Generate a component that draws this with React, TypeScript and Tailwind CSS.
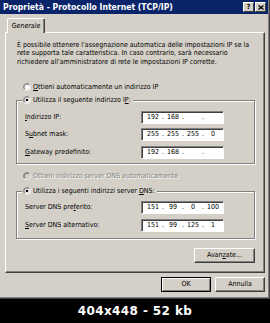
import React from 'react';

const Radio = ({ checked = false, disabled = false }: { checked?: boolean; disabled?: boolean }) => (
  <svg width="8" height="8" viewBox="0 0 12 12" className="shrink-0">
    <circle cx="6" cy="6" r="5" fill={disabled ? '#d4d0c8' : '#fff'} />
    <path d="M2.11 9.89 A5.5 5.5 0 0 1 9.89 2.11" fill="none" stroke="#808080" />
    <path d="M2.82 9.18 A4.5 4.5 0 0 1 9.18 2.82" fill="none" stroke="#404040" />
    <path d="M9.89 2.11 A5.5 5.5 0 0 1 2.11 9.89" fill="none" stroke="#fff" />
    <path d="M9.18 2.82 A4.5 4.5 0 0 1 2.82 9.18" fill="none" stroke="#d4d0c8" />
    {checked && <circle cx="6" cy="6" r="2" fill="#000" />}
  </svg>
);

const IpBox = ({ parts }: { parts: string[] }) => (
  <div className="flex items-center w-[83px] h-[13px] pl-[3px] bg-white border border-t-[#808080] border-l-[#808080] border-b-white border-r-white shadow-[inset_1px_1px_0_#404040]">
    {parts.map((p, i) => (
      <React.Fragment key={i}>
        {i > 0 && <span className="w-[4px] text-center">.</span>}
        <span className="w-[16px] text-center">{p}</span>
      </React.Fragment>
    ))}
  </div>
);

const IpRow = ({ label, parts }: { label: React.ReactNode; parts: string[] }) => (
  <div className="flex items-center h-[13px]">
    <span className="w-[116px] whitespace-nowrap">{label}</span>
    <IpBox parts={parts} />
  </div>
);

const Button = ({ children, def = false, className = '' }: { children: React.ReactNode; def?: boolean; className?: string }) => (
  <div
    className={
      'flex items-center justify-center h-[15px] ' +
      (def
        ? 'border border-black shadow-[inset_1px_1px_0_#fff,inset_-1px_-1px_0_#808080] '
        : 'border border-t-white border-l-white border-r-[#404040] border-b-[#404040] shadow-[inset_-1px_-1px_0_#808080] ') +
      className
    }
  >
    {children}
  </div>
);

export default function App() {
  return (
    <div className="w-[270px] h-[323px] bg-black flex flex-col overflow-hidden text-[7px] leading-[9px] text-black font-['DejaVu_Sans_Condensed','Liberation_Sans',sans-serif]">
      <div className="h-[299px] shrink-0 bg-[#d4d0c8] border-r border-b border-[#404040]">
        <div className="h-full border-r border-b border-[#808080] flex flex-col">
          {/* title bar */}
          <div className="h-[14px] flex items-center justify-between pl-[3px] pr-[2px] bg-[#0a246a]">
            <span className="text-white font-bold text-[8.6px] whitespace-nowrap">Proprietà - Protocollo Internet (TCP/IP)</span>
            <div className="flex gap-[1px]">
              <div className="w-[11px] h-[10px] bg-[#d4d0c8] flex items-center justify-center border border-t-white border-l-white border-r-[#404040] border-b-[#404040] font-bold text-[7px] leading-none">
                ?
              </div>
              <div className="w-[11px] h-[10px] bg-[#d4d0c8] flex items-center justify-center border border-t-white border-l-white border-r-[#404040] border-b-[#404040]">
                <svg width="6" height="5" viewBox="0 0 6 5">
                  <path d="M0.5 0.5 L5.5 4.5 M5.5 0.5 L0.5 4.5" stroke="#000" strokeWidth="1.3" />
                </svg>
              </div>
            </div>
          </div>

          <div className="flex flex-col pl-[5px] pr-[2px] pt-[4px]">
            {/* tab */}
            <div className="relative z-10 ml-[2px] -mb-[1px] w-[38px] h-[15px] bg-[#d4d0c8] flex items-center justify-center border-t border-l border-r border-t-white border-l-white border-r-[#404040] shadow-[inset_-1px_0_0_#808080] rounded-t-[2px]">
              Generale
            </div>

            {/* panel */}
            <div className="w-[260px] h-[241px] flex flex-col border border-t-white border-l-white border-r-[#404040] border-b-[#404040] shadow-[inset_-1px_-1px_0_#808080]">
              <p className="pl-[11px] pt-[7.5px] leading-[8.7px] whitespace-nowrap">
                È possibile ottenere l'assegnazione automatica delle impostazioni IP se la
                <br />
                rete supporta tale caratteristica. In caso contrario, sarà necessario
                <br />
                richiedere all'amministratore di rete le impostazioni IP corrette.
              </p>

              <div className="mt-[16px] ml-[17px] h-[9px] flex items-center gap-[2px]">
                <Radio />
                <span>
                  <span className="underline">O</span>ttieni automaticamente un indirizzo IP
                </span>
              </div>

              <fieldset className="mt-[4px] ml-[10px] w-[239px] border border-[#808080] shadow-[inset_1px_1px_0_#fff,1px_1px_0_#fff] pb-[4.5px]">
                <legend className="ml-[5px] pl-[1px] pr-[2px] h-[9px] flex items-center gap-[2px] bg-[#d4d0c8]">
                  <Radio checked />
                  <span>
                    Utilizza il seguente indirizzo I<span className="underline">P</span>:
                  </span>
                </legend>
                <div className="pt-[6px] pl-[8px] flex flex-col gap-[4.5px]">
                  <IpRow label={<><span className="underline">I</span>ndirizzo IP:</>} parts={['192', '168', '', '']} />
                  <IpRow label={<>S<span className="underline">u</span>bnet mask:</>} parts={['255', '255', '255', '0']} />
                  <IpRow label={<><span className="underline">G</span>ateway predefinito:</>} parts={['192', '168', '', '']} />
                </div>
              </fieldset>

              <div className="mt-[7.5px] ml-[17px] h-[9px] flex items-center gap-[2px] text-[#808080] [text-shadow:1px_1px_0_#fff]">
                <Radio disabled />
                <span>Ottieni indirizzo server DNS automaticamente</span>
              </div>

              <fieldset className="mt-[6px] ml-[10px] w-[239px] border border-[#808080] shadow-[inset_1px_1px_0_#fff,1px_1px_0_#fff] pb-[6.5px]">
                <legend className="ml-[5px] pl-[1px] pr-[2px] h-[9px] flex items-center gap-[2px] bg-[#d4d0c8]">
                  <Radio checked />
                  <span>
                    Utilizza i seguenti indirizzi server <span className="underline">D</span>NS:
                  </span>
                </legend>
                <div className="pt-[5px] pl-[8px] flex flex-col gap-[5px]">
                  <IpRow label={<>Server DNS pre<span className="underline">f</span>erito:</>} parts={['151', '99', '0', '100']} />
                  <IpRow label={<><span className="underline">S</span>erver DNS alternativo:</>} parts={['151', '99', '125', '1']} />
                </div>
              </fieldset>

              <div className="mt-[9px] mr-[9px] self-end">
                <Button className="w-[61px]">
                  <span>
                    Avan<span className="underline">z</span>ate...
                  </span>
                </Button>
              </div>
            </div>

            {/* dialog buttons */}
            <div className="mt-[4px] pr-[1px] flex justify-end gap-[4px]">
              <Button def className="w-[50px]">OK</Button>
              <Button className="w-[50px]">Annulla</Button>
            </div>
          </div>
        </div>
      </div>

      <div className="flex-1 flex items-center justify-center text-white font-bold text-[12px] tracking-[0.4px] font-['DejaVu_Sans',sans-serif]">
        404x448 - 52 kb
      </div>
    </div>
  );
}
